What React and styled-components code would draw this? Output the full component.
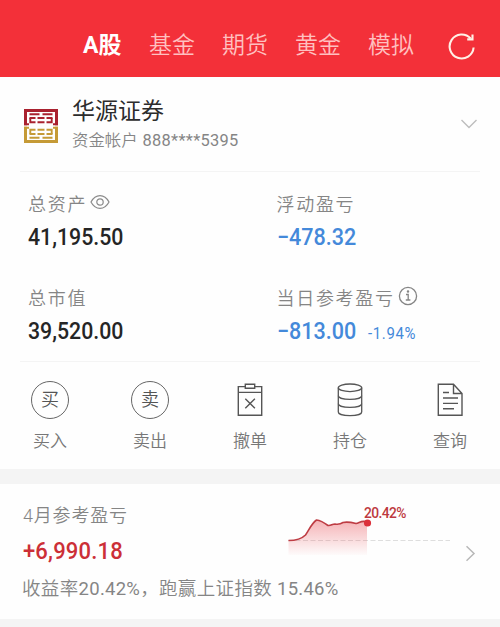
import styled, { createGlobalStyle } from "styled-components";

const GlobalStyle = createGlobalStyle`
  * {
    box-sizing: border-box;
  }

  body {
    margin: 0;
    background: #f4f4f4;
    font-family: Roboto, "Noto Sans CJK SC", sans-serif;
    font-weight: 350;
  }

  svg {
    display: block;
    flex: none;
  }
`;

const Page = styled.div`
  width: 500px;
  height: 627px;
  overflow: hidden;
`;

const Header = styled.header`
  display: flex;
  align-items: center;
  height: 77px;
  padding: 15px 24px 0 83px;
  background: #f33039;
`;

const Tabs = styled.nav`
  display: flex;
  gap: 27px;
  width: 365px;
`;

const Tab = styled.span`
  width: ${(props) => (props.$active ? "39px" : "46px")};
  line-height: 32px;
  font-size: 23px;
  font-weight: ${(props) => (props.$active ? 700 : 350)};
  color: ${(props) => (props.$active ? "#fff" : "#ffc0c0")};
  white-space: nowrap;
`;

const Card = styled.section`
  background: #fefefe;
`;

const Account = styled.div`
  display: flex;
  align-items: center;
  height: 95px;
  margin: 0 20px;
  padding: 3px 2px 0 4px;
  border-bottom: 1px solid #f4f4f4;
`;

const AccountInfo = styled.div`
  flex: 1;
  margin-left: 14px;
`;

const Broker = styled.div`
  line-height: 32px;
  margin-top: -1px;
  font-size: 23px;
  font-weight: 400;
  color: #2c2c2c;
`;

const AccountNo = styled.div`
  line-height: 26px;
  font-size: 16.4px;
  color: #858585;

  span {
    margin-left: 1px;
    font-weight: 400;
    letter-spacing: 0.3px;
  }
`;

const Assets = styled.div`
  display: grid;
  grid-template-columns: 248.5px 1fr;
  grid-template-rows: 94px 95px;
  margin: 0 20px;
  padding-left: 8px;
  border-bottom: 1px solid #f4f4f4;
`;

const Asset = styled.div`
  padding-top: 17px;
`;

const Label = styled.div`
  display: flex;
  align-items: center;
  gap: 3px;
  height: 28px;
  font-size: 18px;
  letter-spacing: 1.7px;
  color: #858585;

  svg {
    position: relative;
    top: -1px;
  }
`;

const Value = styled.div`
  display: flex;
  align-items: baseline;
  height: 40px;
  line-height: 40px;
  font-size: 23.8px;
  font-weight: 500;
  color: ${(props) => props.$color || "#252525"};
  transform: scaleX(${(props) => (props.$color ? 0.905 : 0.895)});
  transform-origin: left;
`;

const Percent = styled.span`
  margin-left: 13px;
  font-size: 16.5px;
  font-weight: 400;
  letter-spacing: 0.7px;
`;

const Actions = styled.div`
  display: grid;
  grid-template-columns: repeat(5, 100px);
  height: 107px;
  padding-top: 18px;
`;

const Action = styled.div`
  display: flex;
  flex-direction: column;
  align-items: center;
  color: #777;
  font-size: 17px;
  line-height: 24px;
`;

const ActionIcon = styled.div`
  display: flex;
  align-items: center;
  justify-content: center;
  height: 40px;
  margin-bottom: 9px;
`;

const Round = styled.div`
  width: 38px;
  height: 38px;
  border: 1.5px solid #666;
  border-radius: 50%;
  text-align: center;
  font-size: 18px;
  line-height: 36px;
  color: #555;
`;

const Monthly = styled(Card)`
  display: flex;
  align-items: center;
  height: 135px;
  margin-top: 15px;
  padding: 1px 24px 0 22px;
`;

const MonthlyMain = styled.div`
  flex: 1;
`;

const MonthlyTop = styled.div`
  display: flex;
  justify-content: space-between;
  height: 73px;
`;

const MonthlyLabel = styled.div`
  line-height: 30px;
  font-size: 18px;
  letter-spacing: 0.8px;
  padding-left: 1px;
  color: #858585;
`;

const Profit = styled.div`
  line-height: 41px;
  font-size: 23.8px;
  font-weight: 500;
  letter-spacing: 0.2px;
  padding-left: 1px;
  color: #cc2f37;
  transform: scaleX(0.925);
  transform-origin: left;
`;

const Summary = styled.div`
  line-height: 30px;
  font-size: 18.5px;
  letter-spacing: 0.36px;
  white-space: nowrap;
  color: #858585;

  span {
    font-weight: 400;
    letter-spacing: 0.25px;
  }
`;

const Trend = styled.div`
  width: 162px;
  margin-right: 16px;
`;

const TrendValue = styled.div`
  height: 13px;
  padding-left: 76px;
  line-height: 25px;
  font-size: 13.8px;
  font-weight: 500;
  letter-spacing: -0.6px;
  color: #bd3940;
`;

const RefreshIcon = () => (
  <svg width="28" height="30" viewBox="0 0 28 30" fill="none" stroke="#fff0e6" strokeWidth="2.1">
    <path d="M25.6 16.5A12 12 0 1 1 22.6 7.5" />
    <path d="M19.2 8.4h5.3V3.4" />
  </svg>
);

const LogoHalf = ({ color }) => (
  <g stroke={color} fill="none">
    <path d="M1.5 16.2V1.5H32.5V16.2" strokeWidth="3" />
    <path d="M5.5 5.2H15.5M18.5 5.2H28.5M5.5 9H11.5M13.5 9H20.5M22.5 9H28.5" strokeWidth="1.9" />
    <path d="M6.3 9V13.2H11.5M27.7 9V13.2H22.5M13.5 13.2H20.5M0 15.3H5M29 15.3H34" strokeWidth="1.9" />
  </g>
);

const Logo = () => (
  <svg width="34" height="34" viewBox="0 0 34 34">
    <LogoHalf color="#a9212f" />
    <g transform="translate(0 34) scale(1 -1)">
      <LogoHalf color="#c59a36" />
    </g>
  </svg>
);

const EyeIcon = () => (
  <svg width="20" height="16" viewBox="0 0 20 16" fill="none" stroke="#8b8b8b" strokeWidth="1.2">
    <path d="M1 8C3.2 3.8 6.2 1.6 10 1.6S16.8 3.8 19 8c-2.2 4.2-5.2 6.4-9 6.4S3.2 12.2 1 8z" />
    <circle cx="10" cy="8" r="3.2" />
  </svg>
);

const InfoIcon = () => (
  <svg width="20" height="20" viewBox="0 0 20 20" fill="none" stroke="#858585" strokeWidth="1.3">
    <circle cx="10" cy="10" r="8.6" />
    <path d="M8 8.5h2.2v5.5M7.8 14h4.6" />
    <circle cx="10" cy="5.5" r="0.6" fill="#858585" />
  </svg>
);

const ClipboardIcon = () => (
  <svg width="26" height="34" viewBox="0 0 26 34" fill="none" stroke="#555" strokeWidth="1.4">
    <path d="M8.3 3.6H1.3V32.2H24.7V3.6H17.7M1.3 9.4H24.7" />
    <path d="M8.3 1.2H17.7V5.3H8.3zM8.3 15.7l9.6 9.6M17.9 15.7l-9.6 9.6" />
  </svg>
);

const StackIcon = () => (
  <svg width="26" height="34" viewBox="0 0 26 34" fill="none" stroke="#555" strokeWidth="1.3">
    <ellipse cx="13" cy="4.8" rx="11.7" ry="3.8" />
    <path d="M1.3 4.8V29C1.3 31.2 6.5 32.7 13 32.7S24.7 31.2 24.7 29V4.8" />
    <path d="M1.3 12.7C1.3 14.9 6.5 16.3 13 16.3S24.7 14.9 24.7 12.7M1.3 20.7C1.3 22.9 6.5 24.3 13 24.3S24.7 22.9 24.7 20.7" />
  </svg>
);

const DocumentIcon = () => (
  <svg width="26" height="34" viewBox="0 0 26 34" fill="none" stroke="#555" strokeWidth="1.4">
    <path d="M1.3 1.2H16.5L25 10.5V32.2H1.3zM16.5 1.2V10.5H25" />
    <path d="M6 9.5H12M6 15H21M6 20.4H21M6 25.8H17" />
  </svg>
);

const ChevronDown = () => (
  <svg width="18" height="15" viewBox="0 0 18 15" fill="none" stroke="#bdbdbd" strokeWidth="1.4">
    <path d="M1.5 2L9 9.5L16.5 2" />
  </svg>
);

const ChevronRight = () => (
  <svg width="10" height="20" viewBox="0 0 10 20" fill="none" stroke="#b8b8b8" strokeWidth="1.5">
    <path d="M0.5 4.3L8 11.5L0.5 18.7" />
  </svg>
);

const TREND = "M0.5 26.5C7 26.5 13 25.5 17.5 21C21 16 23.5 9.5 28.5 6C33 6.5 36 8.5 40 11.5C43 12 44 10 47 10C50 10.5 52 10.5 55 8.5C59 7.5 64 8.5 68 9.5C72 8.5 74 6 79 8";

const TrendChart = () => (
  <svg width="162" height="44" viewBox="0 0 162 44">
    <defs>
      <linearGradient id="trend" x1="0" y1="0" x2="0" y2="1">
        <stop offset="0" stopColor="#e94a52" stopOpacity="0.42" />
        <stop offset="1" stopColor="#e94a52" stopOpacity="0.02" />
      </linearGradient>
    </defs>
    <path d="M0 26.5H162" stroke="#dedede" strokeDasharray="5 2.5" />
    <path d={TREND + "V41H0.5Z"} fill="url(#trend)" />
    <path d={TREND} fill="none" stroke="#be3d44" strokeWidth="1.6" />
    <circle cx="79.5" cy="9" r="3.6" fill="#dc303a" />
  </svg>
);

const TABS = ["A股", "基金", "期货", "黄金", "模拟"];

const ACTIONS = [
  { label: "买入", icon: <Round>买</Round> },
  { label: "卖出", icon: <Round>卖</Round> },
  { label: "撤单", icon: <ClipboardIcon /> },
  { label: "持仓", icon: <StackIcon /> },
  { label: "查询", icon: <DocumentIcon /> },
];

const App = () => {
  return (
    <Page>
      <GlobalStyle />
      <Header>
        <Tabs>
          {TABS.map((tab, i) => (
            <Tab key={tab} $active={i === 0}>
              {tab}
            </Tab>
          ))}
        </Tabs>
        <RefreshIcon />
      </Header>

      <Card>
        <Account>
          <Logo />
          <AccountInfo>
            <Broker>华源证券</Broker>
            <AccountNo>
              资金帐户 <span>888****5395</span>
            </AccountNo>
          </AccountInfo>
          <ChevronDown />
        </Account>

        <Assets>
          <Asset>
            <Label>
              总资产
              <EyeIcon />
            </Label>
            <Value>41,195.50</Value>
          </Asset>
          <Asset>
            <Label>浮动盈亏</Label>
            <Value $color="#4489da">−478.32</Value>
          </Asset>
          <Asset>
            <Label>总市值</Label>
            <Value>39,520.00</Value>
          </Asset>
          <Asset>
            <Label>
              当日参考盈亏
              <InfoIcon />
            </Label>
            <Value $color="#4489da">
              −813.00 <Percent>-1.94%</Percent>
            </Value>
          </Asset>
        </Assets>

        <Actions>
          {ACTIONS.map(({ label, icon }) => (
            <Action key={label}>
              <ActionIcon>{icon}</ActionIcon>
              {label}
            </Action>
          ))}
        </Actions>
      </Card>

      <Monthly>
        <MonthlyMain>
          <MonthlyTop>
            <div>
              <MonthlyLabel>4月参考盈亏</MonthlyLabel>
              <Profit>+6,990.18</Profit>
            </div>
            <Trend>
              <TrendValue>20.42%</TrendValue>
              <TrendChart />
            </Trend>
          </MonthlyTop>
          <Summary>
            收益率<span>20.42%</span>，跑赢上证指数 <span>15.46%</span>
          </Summary>
        </MonthlyMain>
        <ChevronRight />
      </Monthly>
    </Page>
  );
};

export default App;
